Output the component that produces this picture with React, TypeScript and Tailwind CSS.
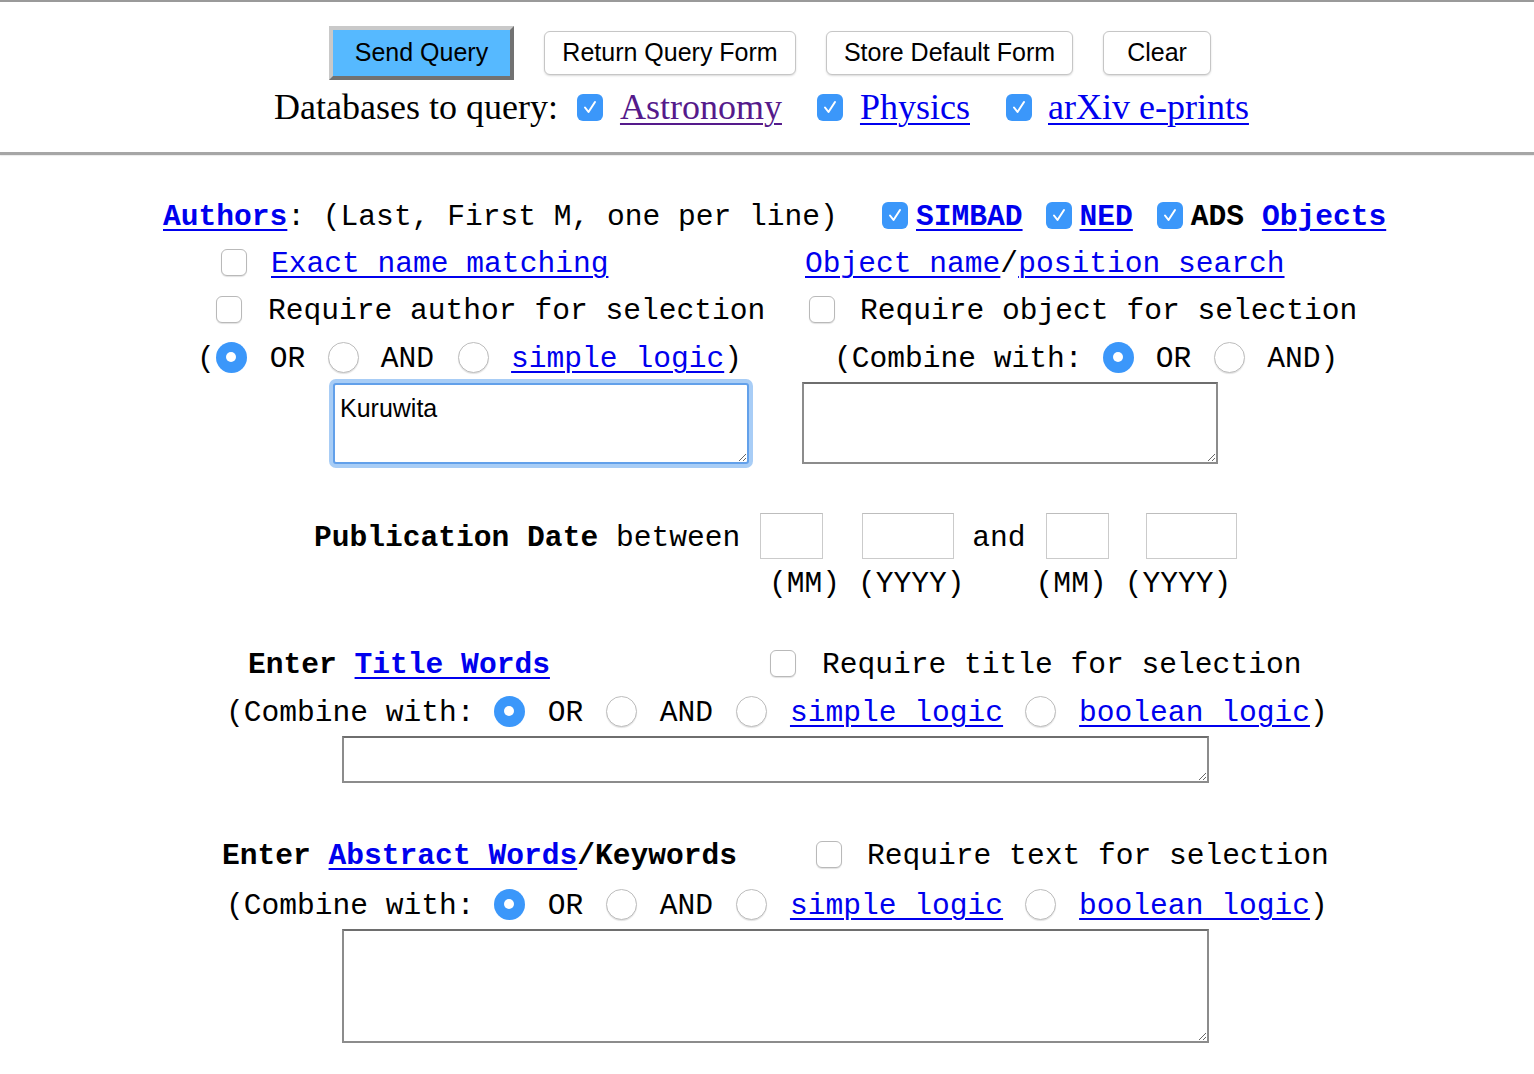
import React from 'react'

const mono =
  "font-['Liberation_Mono',monospace] text-[29.6px] leading-none text-black whitespace-pre [&_span]:pt-[6px]"

const Link = ({ children, bold, visited }: { children: React.ReactNode; bold?: boolean; visited?: boolean }) => (
  <a
    href="#"
    className={`${visited ? 'text-[#551a8b]' : 'text-[#0000ee]'} underline decoration-[2px] underline-offset-[4px] ${bold ? 'font-bold' : ''}`}
  >
    {children}
  </a>
)

const Check = ({ checked, className = '' }: { checked?: boolean; className?: string }) =>
  checked ? (
    <div className={`flex h-[27px] w-[26px] shrink-0 items-center justify-center rounded-[6px] bg-[#3b97fa] ${className}`}>
      <svg width="16" height="16" viewBox="0 0 16 16" fill="none">
        <path d="M3 8.5 L6.5 13 L13 3" stroke="white" strokeWidth="2" strokeLinecap="round" strokeLinejoin="round" />
      </svg>
    </div>
  ) : (
    <div
      className={`h-[27px] w-[26px] shrink-0 rounded-[6px] border border-[#b9b9b9] bg-white shadow-[0_1px_1px_rgba(0,0,0,0.12)] ${className}`}
    />
  )

const Radio = ({ checked, className = '' }: { checked?: boolean; className?: string }) =>
  checked ? (
    <div className={`flex h-[31px] w-[31px] shrink-0 items-center justify-center rounded-full bg-[#3b97fa] ${className}`}>
      <div className="h-[10px] w-[10px] rounded-full bg-white" />
    </div>
  ) : (
    <div
      className={`h-[31px] w-[31px] shrink-0 rounded-full border border-[#bdbdbd] bg-white shadow-[0_1px_1px_rgba(0,0,0,0.12)] ${className}`}
    />
  )

const Btn = ({ children, className = '' }: { children: React.ReactNode; className?: string }) => (
  <button
    className={`flex h-[44px] items-center justify-center rounded-[6px] border border-[#c6c6c6] bg-white shadow-[0_1px_2px_rgba(0,0,0,0.15)] font-['Liberation_Sans',Arial,sans-serif] text-[25px] text-black ${className}`}
  >
    {children}
  </button>
)

const CombineRow = () => (
  <div className={`flex h-[50px] items-center pl-[226px] ${mono}`}>
    <span>(Combine with:</span>
    <Radio checked className="ml-[19px]" />
    <span className="ml-[23px]">OR</span>
    <Radio className="ml-[22.5px]" />
    <span className="ml-[23px]">AND</span>
    <Radio className="ml-[23px]" />
    <span className="ml-[23px]">
      <Link>simple logic</Link>
    </span>
    <Radio className="ml-[22px]" />
    <span className="ml-[23px]">
      <Link>boolean logic</Link>)
    </span>
  </div>
)

export default function App() {
  return (
    <div className="min-h-screen w-[1534px] bg-white">
      {/* HEADER */}
      <div className="flex flex-col items-center border-t-2 border-[#9a9a9a] pt-[24px]">
        <div className="flex h-[54px] items-center gap-[30px] pl-[6px]">
          <button className="flex h-[54px] w-[185px] items-center justify-center border-4 border-t-[#c9c9c9] border-l-[#c9c9c9] border-b-[#727272] border-r-[#727272] bg-[#56b9ff] font-['Liberation_Sans',Arial,sans-serif] text-[25px] text-black">
            Send Query
          </button>
          <Btn className="w-[252px]">Return Query Form</Btn>
          <Btn className="w-[247px]">Store Default Form</Btn>
          <Btn className="w-[108px]">Clear</Btn>
        </div>

        <div className="mt-[4px] flex h-[46px] items-center pr-[11px] font-['Liberation_Serif','Times_New_Roman',serif] text-[36px] leading-none text-black">
          <span>Databases to query:</span>
          <Check checked className="ml-[19px]" />
          <span className="ml-[17px]">
            <Link visited>Astronomy</Link>
          </span>
          <Check checked className="ml-[35px]" />
          <span className="ml-[17px]">
            <Link>Physics</Link>
          </span>
          <Check checked className="ml-[36px]" />
          <span className="ml-[16px]">
            <Link>arXiv e-prints</Link>
          </span>
        </div>
      </div>

      <div className="mt-[22px] h-[3px] bg-[#a6a6a6] shadow-[0_1px_1px_rgba(0,0,0,0.08)]" />

      {/* AUTHORS */}
      <div className={`mt-[37px] flex h-[46px] items-center pl-[163px] ${mono}`}>
        <span className="w-[719px]">
          <Link bold>Authors</Link>: (Last, First M, one per line)
        </span>
        <Check checked />
        <span className="ml-[8px]">
          <Link bold>SIMBAD</Link>
        </span>
        <Check checked className="ml-[23px]" />
        <span className="ml-[8px]">
          <Link bold>NED</Link>
        </span>
        <Check checked className="ml-[24px]" />
        <span className="ml-[8px] font-bold">
          ADS <Link bold>Objects</Link>
        </span>
      </div>

      <div className={`flex h-[48px] items-center ${mono}`}>
        <div className="flex w-[800px] items-center pl-[221px]">
          <Check />
          <span className="ml-[24px]">
            <Link>Exact name matching</Link>
          </span>
        </div>
        <div className="flex items-center pl-[5px]">
          <span>
            <Link>Object name</Link>/<Link>position search</Link>
          </span>
        </div>
      </div>

      <div className={`flex h-[46px] items-center ${mono}`}>
        <div className="flex w-[800px] items-center pl-[216px]">
          <Check />
          <span className="ml-[26px]">Require author for selection</span>
        </div>
        <div className="flex items-center pl-[9px]">
          <Check />
          <span className="ml-[25px]">Require object for selection</span>
        </div>
      </div>

      <div className={`flex h-[50px] items-center ${mono}`}>
        <div className="flex w-[800px] items-center pl-[197px]">
          <span>(</span>
          <Radio checked className="ml-[1px]" />
          <span className="ml-[23px]">OR</span>
          <Radio className="ml-[22.5px]" />
          <span className="ml-[22px]">AND</span>
          <Radio className="ml-[24px]" />
          <span className="ml-[22px]">
            <Link>simple logic</Link>)
          </span>
        </div>
        <div className="flex items-center pl-[34px]">
          <span>(Combine with:</span>
          <Radio checked className="ml-[20px]" />
          <span className="ml-[22px]">OR</span>
          <Radio className="ml-[23px]" />
          <span className="ml-[22px]">AND)</span>
        </div>
      </div>

      <div className="flex h-[83px] items-start">
        <div className="w-[800px] pl-[333px] pt-[1px]">
          <textarea
            defaultValue="Kuruwita"
            className="block h-[81px] w-[416px] rounded-[3px] border-2 border-[#62a0ea] bg-white px-[5px] pt-[8px] font-['Liberation_Sans',Arial,sans-serif] text-[25px] leading-[30px] text-black shadow-[0_0_0_4px_#a8cdf6] outline-none"
          />
        </div>
        <div className="pl-[2px]">
          <textarea className="block h-[82px] w-[416px] border-2 border-[#8c8c8c] border-t-[#6e6e6e] bg-white outline-none" />
        </div>
      </div>

      {/* PUBLICATION DATE */}
      <div className={`mt-[48px] flex h-[46px] items-center pl-[314px] ${mono}`}>
        <span>
          <b>Publication Date</b> between
        </span>
        <input className="ml-[20px] h-[46px] w-[63px] border border-[#cbcbcb] border-t-[#bdbdbd] bg-white outline-none" />
        <input className="ml-[39px] h-[46px] w-[92px] border border-[#cbcbcb] border-t-[#bdbdbd] bg-white outline-none" />
        <span className="ml-[18px]">and</span>
        <input className="ml-[20px] h-[46px] w-[63px] border border-[#cbcbcb] border-t-[#bdbdbd] bg-white outline-none" />
        <input className="ml-[37px] h-[46px] w-[91px] border border-[#cbcbcb] border-t-[#bdbdbd] bg-white outline-none" />
      </div>
      <div className={`flex h-[46px] items-center pl-[769px] ${mono}`}>
        <span>(MM)</span>
        <span className="ml-[18px]">(YYYY)</span>
        <span className="ml-[71px]">(MM)</span>
        <span className="ml-[18px]">(YYYY)</span>
      </div>

      {/* TITLE */}
      <div className={`mt-[35px] flex h-[46px] items-center pl-[248px] ${mono}`}>
        <span className="font-bold">
          Enter <Link bold>Title Words</Link>
        </span>
        <Check className="ml-[220px]" />
        <span className="ml-[26px]">Require title for selection</span>
      </div>
      <CombineRow />
      <div className="pl-[342px]">
        <textarea className="block h-[47px] w-[867px] border-2 border-[#8c8c8c] border-t-[#6e6e6e] bg-white outline-none" />
      </div>

      {/* ABSTRACT */}
      <div className={`mt-[48px] flex h-[46px] items-center pl-[222px] ${mono}`}>
        <span className="font-bold">
          Enter <Link bold>Abstract Words</Link>/Keywords
        </span>
        <Check className="ml-[79px]" />
        <span className="ml-[25px]">Require text for selection</span>
      </div>
      <div className="mt-[2px]">
        <CombineRow />
      </div>
      <div className="pb-[30px] pl-[342px]">
        <textarea className="block h-[114px] w-[867px] border-2 border-[#8c8c8c] border-t-[#6e6e6e] bg-white outline-none" />
      </div>
    </div>
  )
}
